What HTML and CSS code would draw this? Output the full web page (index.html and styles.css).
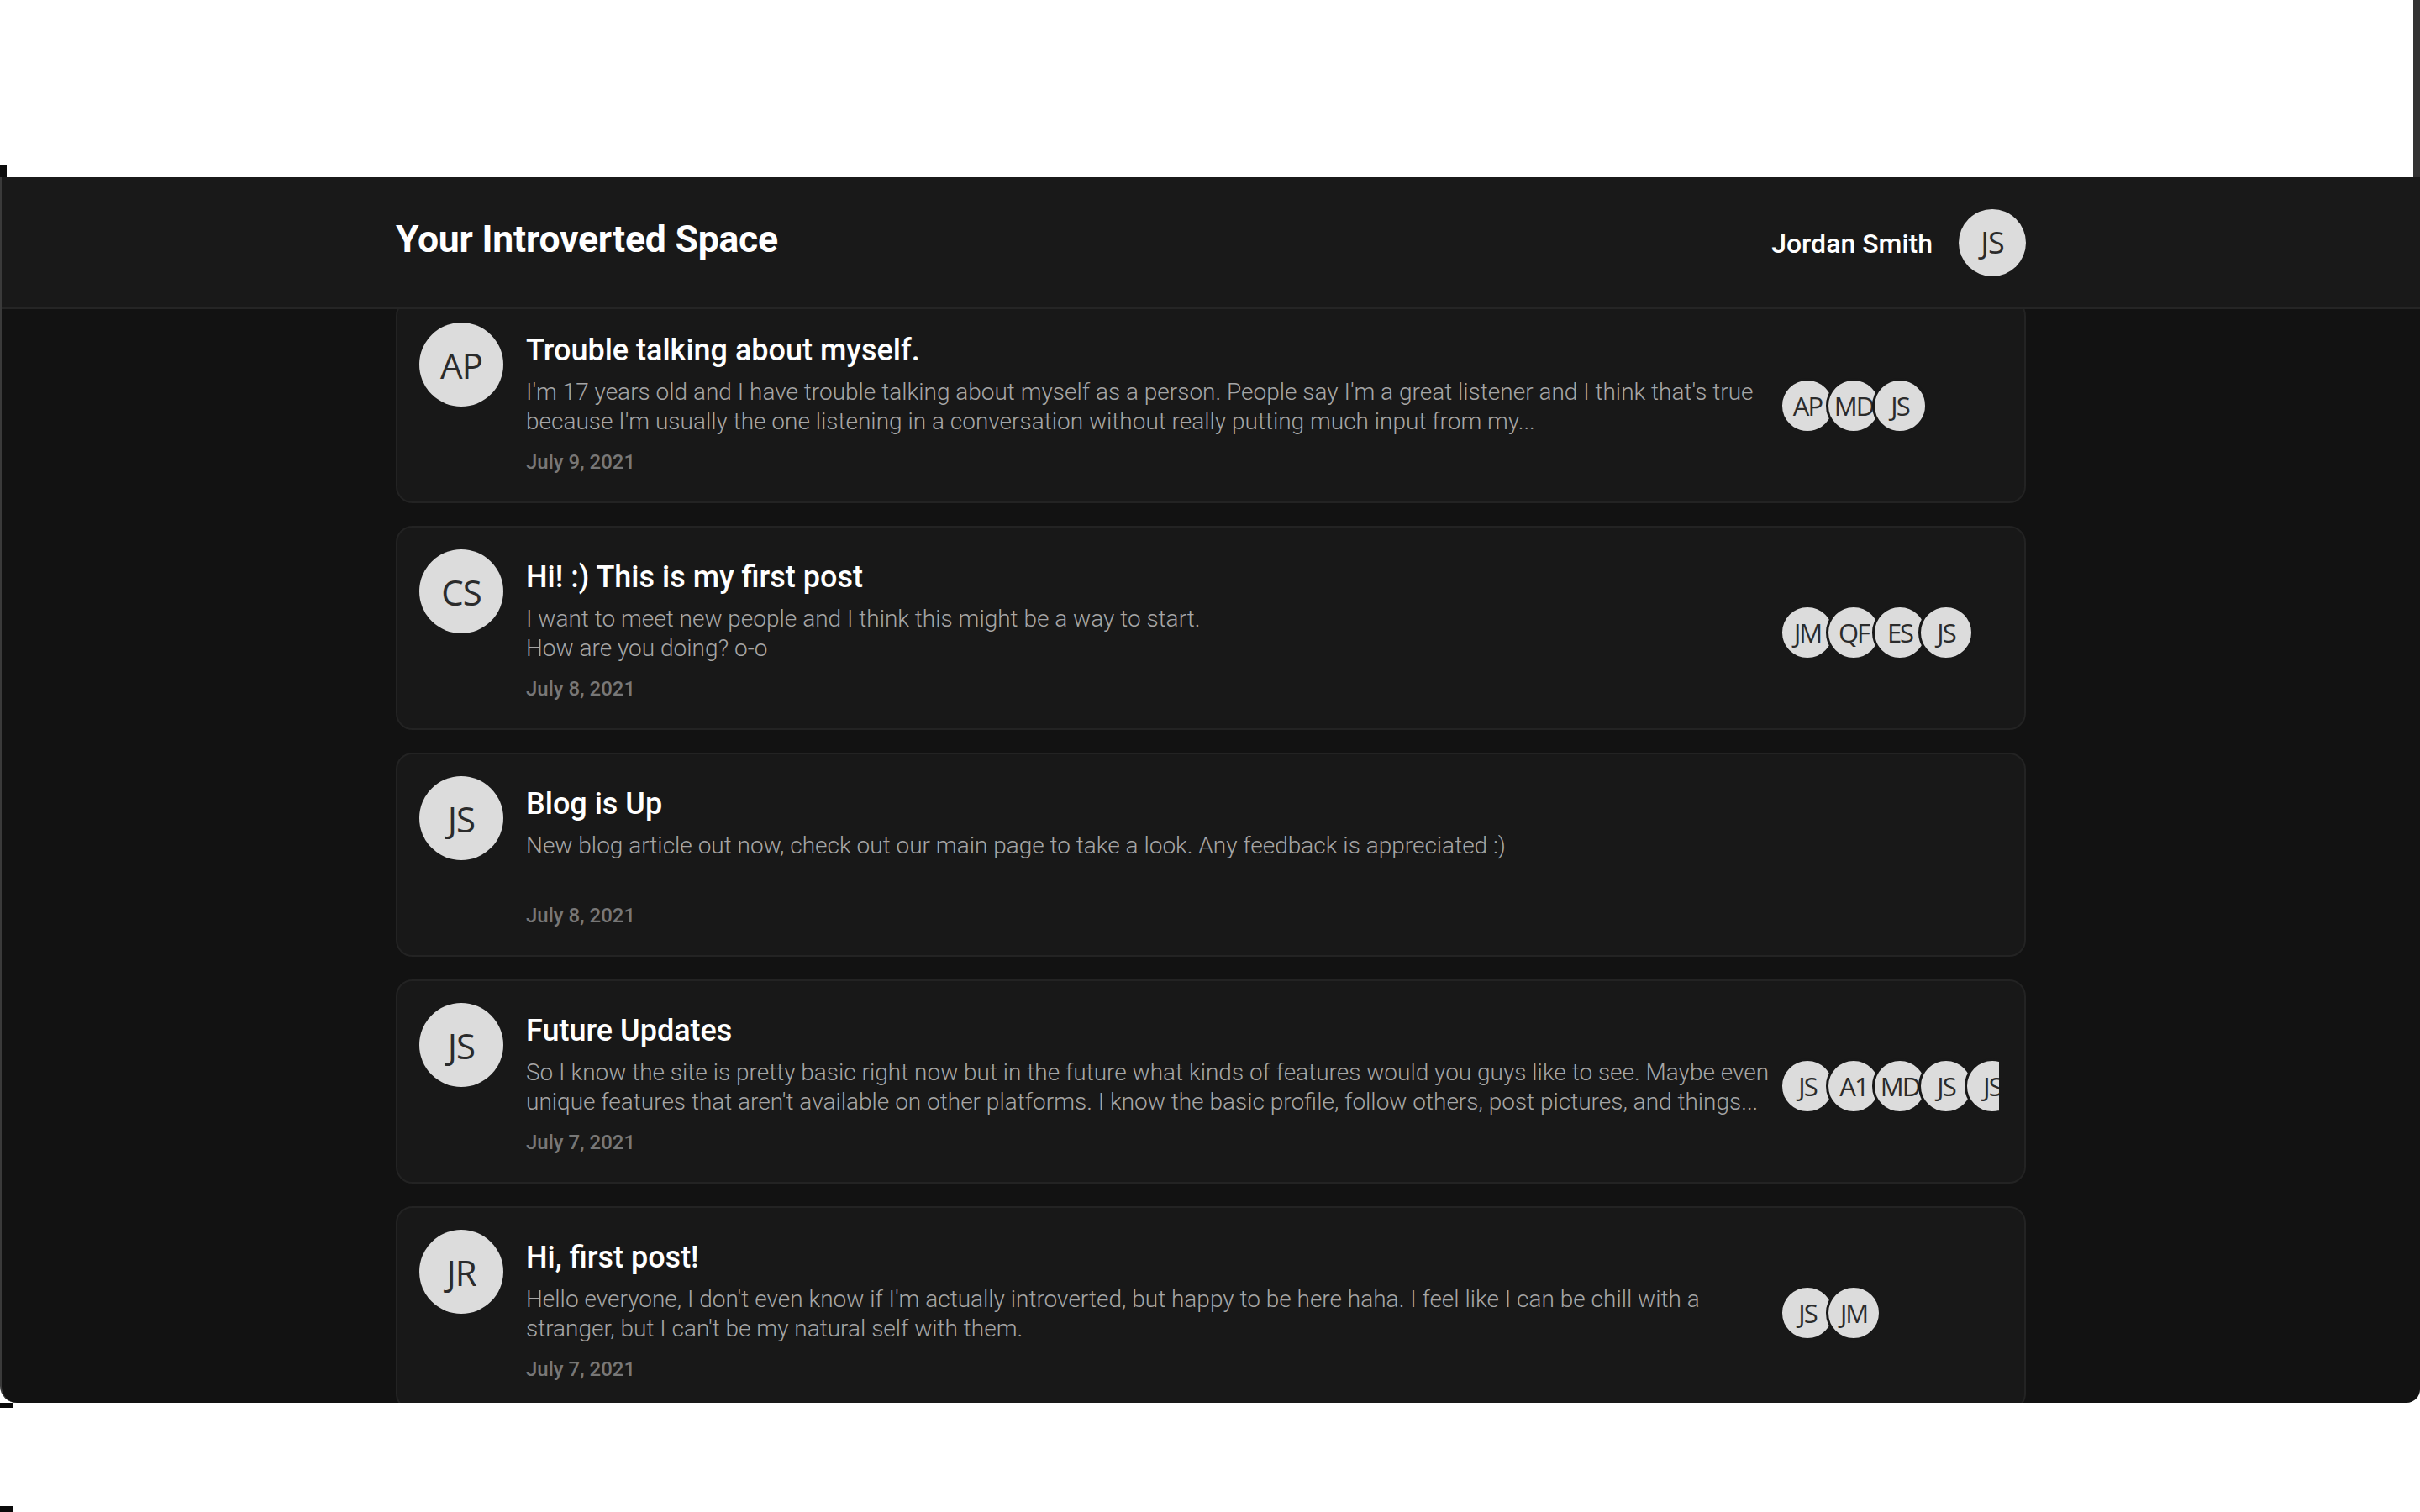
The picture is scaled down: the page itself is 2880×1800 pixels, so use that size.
FILE: index.html
```html
<!DOCTYPE html>
<html lang="en">
<head>
<meta charset="utf-8">
<title>Your Introverted Space</title>
<link rel="stylesheet" href="styles.css">
</head>
<body>
<div class="page">
  <div class="top"><span class="mark-tl"></span><span class="strip"></span></div>
  <div class="window">
    <header class="topbar">
      <div class="bar-inner">
        <h1 class="brand">Your Introverted Space</h1>
        <div class="user">
          <span class="user-name">Jordan Smith</span>
          <span class="avatar avatar-md">JS</span>
        </div>
      </div>
    </header>
    <main class="feed">
      <article class="post">
        <div class="avatar avatar-lg">AP</div>
        <div class="post-body">
          <h2 class="post-title">Trouble talking about myself.</h2>
          <p class="post-text">I'm 17 years old and I have trouble talking about myself as a person. People say I'm a great listener and I think that's true because I'm usually the one listening in a conversation without really putting much input from my...</p>
          <div class="post-date">July 9, 2021</div>
        </div>
        <div class="participants"><span class="chip">AP</span><span class="chip">MD</span><span class="chip">JS</span></div>
      </article>
      <article class="post">
        <div class="avatar avatar-lg">CS</div>
        <div class="post-body">
          <h2 class="post-title">Hi! :) This is my first post</h2>
          <p class="post-text">I want to meet new people and I think this might be a way to start.<br>How are you doing? o-o</p>
          <div class="post-date">July 8, 2021</div>
        </div>
        <div class="participants"><span class="chip">JM</span><span class="chip">QF</span><span class="chip">ES</span><span class="chip">JS</span></div>
      </article>
      <article class="post">
        <div class="avatar avatar-lg">JS</div>
        <div class="post-body">
          <h2 class="post-title">Blog is Up</h2>
          <p class="post-text">New blog article out now, check out our main page to take a look. Any feedback is appreciated :)</p>
          <div class="post-date">July 8, 2021</div>
        </div>
        <div class="participants"></div>
      </article>
      <article class="post">
        <div class="avatar avatar-lg">JS</div>
        <div class="post-body">
          <h2 class="post-title">Future Updates</h2>
          <p class="post-text">So I know the site is pretty basic right now but in the future what kinds of features would you guys like to see. Maybe even unique features that aren't available on other platforms. I know the basic profile, follow others, post pictures, and things...</p>
          <div class="post-date">July 7, 2021</div>
        </div>
        <div class="participants"><span class="chip">JS</span><span class="chip">A1</span><span class="chip">MD</span><span class="chip">JS</span><span class="chip">JS</span></div>
      </article>
      <article class="post">
        <div class="avatar avatar-lg">JR</div>
        <div class="post-body">
          <h2 class="post-title">Hi, first post!</h2>
          <p class="post-text">Hello everyone, I don't even know if I'm actually introverted, but happy to be here haha. I feel like I can be chill with a stranger, but I can't be my natural self with them.</p>
          <div class="post-date">July 7, 2021</div>
        </div>
        <div class="participants"><span class="chip">JS</span><span class="chip">JM</span></div>
      </article>
    </main>
  </div>
  <div class="bottom"><span class="mark-b1"></span><span class="mark-b2"></span></div>
</div>
</body>
</html>
```

FILE: styles.css
```css
html, body {
  margin: 0;
  padding: 0;
  background: #ffffff;
  overflow: hidden;
}

.page {
  width: 2880px;
  height: 1800px;
  display: flex;
  flex-direction: column;
  font-family: Roboto, "Liberation Sans", sans-serif;
}

.top {
  height: 211px;
  display: flex;
  justify-content: space-between;
  align-items: flex-end;
  flex: none;
}

.mark-tl {
  width: 8px;
  height: 14px;
  background: #0c0c0c;
}

.strip {
  width: 8px;
  align-self: stretch;
  background: #333333;
}

.window {
  height: 1459px;
  flex: none;
  display: flex;
  flex-direction: column;
  background: #121212;
  border-left: 2px solid #3a3a3a;
  border-bottom-left-radius: 20px;
  border-bottom-right-radius: 16px;
  overflow: hidden;
}

.topbar {
  position: relative;
  z-index: 2;
  height: 155px;
  flex: none;
  background: #191919;
  border-bottom: 2px solid #252525;
}

.bar-inner {
  width: 1940px;
  height: 100%;
  margin: 0 auto;
  display: flex;
  align-items: center;
  justify-content: space-between;
}

.brand {
  margin: 0;
  padding-bottom: 7px;
  font-size: 44.5px;
  font-weight: 700;
  color: #ffffff;
  letter-spacing: -0.2px;
}

.user {
  display: flex;
  align-items: center;
  gap: 31px;
}

.user-name {
  font-size: 32px;
  font-weight: 500;
  color: #ffffff;
  padding-top: 3px;
}

.avatar {
  display: flex;
  align-items: center;
  justify-content: center;
  border-radius: 50%;
  background: #dcdcdc;
  color: #2b2b2b;
  font-family: "Open Sans", "Noto Sans", sans-serif;
  flex: none;
}

.avatar-md {
  width: 80px;
  height: 80px;
  font-size: 36px;
  letter-spacing: -1px;
}

.avatar-lg {
  width: 100px;
  height: 100px;
  font-size: 42px;
  letter-spacing: -1px;
}

.feed {
  flex: 1;
  min-height: 0;
  overflow: hidden;
  display: flex;
  flex-direction: column;
  align-items: center;
  gap: 27px;
}

.post {
  box-sizing: border-box;
  width: 1940px;
  height: 243px;
  flex: none;
  display: flex;
  align-items: flex-start;
  padding: 26px 30px 0 26px;
  background: #181818;
  border: 2px solid #232323;
  border-radius: 20px;
}

.post:first-child {
  margin-top: -12px;
}

.post-body {
  flex: 1;
  min-width: 0;
  margin-left: 27px;
  margin-right: 4px;
  padding-top: 12px;
}

.post-title {
  margin: 0;
  font-size: 36px;
  line-height: 42px;
  font-weight: 500;
  color: #ffffff;
}

.post-text {
  margin: 11px 0 0;
  min-height: 70px;
  font-size: 28px;
  line-height: 35px;
  font-weight: 300;
  color: #a6a6a6;
}

.post-date {
  margin-top: 18px;
  font-size: 24px;
  line-height: 26px;
  font-weight: 500;
  color: #777777;
}

.participants {
  width: 261px;
  flex: none;
  margin-top: 66px;
  display: flex;
  overflow: hidden;
}

.chip {
  width: 60px;
  height: 60px;
  flex: none;
  display: flex;
  align-items: center;
  justify-content: center;
  border-radius: 50%;
  border: 3px solid #181818;
  background: #dcdcdc;
  color: #2b2b2b;
  font-family: "Open Sans", "Noto Sans", sans-serif;
  font-size: 31px;
  letter-spacing: -2px;
  margin-left: -11px;
}

.chip:first-child {
  margin-left: 0;
}

.bottom {
  height: 130px;
  flex: none;
  display: flex;
  flex-direction: column;
  justify-content: space-between;
}

.mark-b1 {
  width: 15px;
  height: 6px;
  background: #0a0a0a;
}

.mark-b2 {
  width: 15px;
  height: 7px;
  background: #0a0a0a;
}
```
